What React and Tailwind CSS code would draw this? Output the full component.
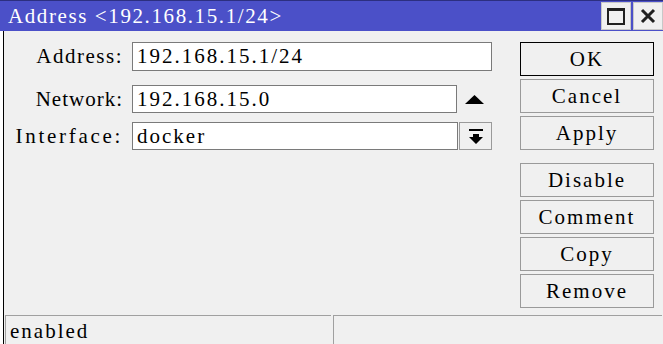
import React from 'react';

const font = "font-['Liberation_Serif',serif] text-[21px] tracking-[2px]";

const TitleButton = ({ children }) => (
  <div className="w-[30px] h-[28px] bg-[#f0f0f0] border border-[#c8c8c8] flex items-center justify-center">
    {children}
  </div>
);

const Field = ({ value, className = '' }) => (
  <div className={`h-full bg-white border border-[#7a7a7a] pl-[4px] flex items-center text-black leading-none ${className}`}>
    {value}
  </div>
);

const Row = ({ label, labelClass, height, children }) => (
  <div className="flex items-center" style={{ height }}>
    <div className={`w-[120px] pr-[1px] text-right text-black leading-none ${labelClass}`}>{label}</div>
    <div className="ml-[8px] flex h-full items-center">{children}</div>
  </div>
);

const ActionButton = ({ label, primary = false }) => (
  <div
    className={`h-[34px] w-[134px] flex items-center justify-center bg-[#f0f0f0] text-black leading-none border ${
      primary ? 'border-black' : 'border-[#9a9a9a]'
    }`}
  >
    {label}
  </div>
);

export default function App() {
  return (
    <div className={`w-[663px] h-[344px] overflow-hidden bg-white flex flex-col ${font}`}>
      {/* title bar */}
      <div className="h-[31px] shrink-0 bg-[#4b50c8] border-t border-[#2c2f80] flex items-center justify-between">
        <div className="pl-[8px] text-white leading-none tracking-[1.6px]">Address &lt;192.168.15.1/24&gt;</div>
        <div className="flex gap-[2px] self-start pt-[1px]">
          <TitleButton>
            <div className="w-[18px] h-[17px] border-2 border-t-[3px] border-[#202020]" />
          </TitleButton>
          <TitleButton>
            <svg width="16" height="16" viewBox="0 0 16 16">
              <path d="M2 2 L14 14 M14 2 L2 14" stroke="#202020" strokeWidth="3" />
            </svg>
          </TitleButton>
        </div>
      </div>

      <div className="flex flex-1">
        <div className="w-[3px] bg-white" />
        <div className="flex-1 flex flex-col bg-[#f0f0f0] border-l border-black">
          <div className="flex-1 flex pt-[11px]">
            {/* form */}
            <div className="flex flex-col w-[488px]">
              <Row label="Address:" labelClass="tracking-[1.5px]" height={29}>
                <Field value="192.168.15.1/24" className="w-[360px]" />
              </Row>
              <div className="h-[14px]" />
              <Row label="Network:" labelClass="tracking-[1px]" height={28}>
                <Field value="192.168.15.0" className="w-[325px]" />
                <div className="w-[35px] flex justify-center">
                  <svg width="19" height="9" viewBox="0 0 19 9">
                    <path d="M9.5 0 L19 9 L0 9 Z" fill="#000" />
                  </svg>
                </div>
              </Row>
              <div className="h-[9px]" />
              <Row label="Interface:" labelClass="tracking-[2.7px]" height={28}>
                <Field value="docker" className="w-[326px]" />
                <div className="ml-[1px] w-[33px] h-full border border-[#9a9a9a] bg-[#f0f0f0] flex items-center justify-center">
                  <svg width="14" height="16" viewBox="0 0 14 16">
                    <rect x="0" y="1" width="14" height="2" fill="#000" />
                    <path d="M4 6 H10 V9 H14 L7 16 L0 9 H4 Z" fill="#000" />
                  </svg>
                </div>
              </Row>
            </div>

            {/* buttons */}
            <div className="ml-[28px] flex flex-col gap-[3px]">
              <ActionButton label="OK" primary />
              <ActionButton label="Cancel" />
              <ActionButton label="Apply" />
              <div className="h-[7px]" />
              <ActionButton label="Disable" />
              <ActionButton label="Comment" />
              <ActionButton label="Copy" />
              <ActionButton label="Remove" />
            </div>
          </div>

          {/* status bar */}
          <div className="h-[29px] shrink-0 flex">
            <div className="ml-[1px] w-[326px] border-t border-l border-[#a0a0a0] pl-[4px] pt-[5px] text-black leading-none">
              enabled
            </div>
            <div className="ml-[2px] flex-1 mr-[1px] border-t border-l border-[#a0a0a0]" />
          </div>
        </div>
      </div>
    </div>
  );
}
